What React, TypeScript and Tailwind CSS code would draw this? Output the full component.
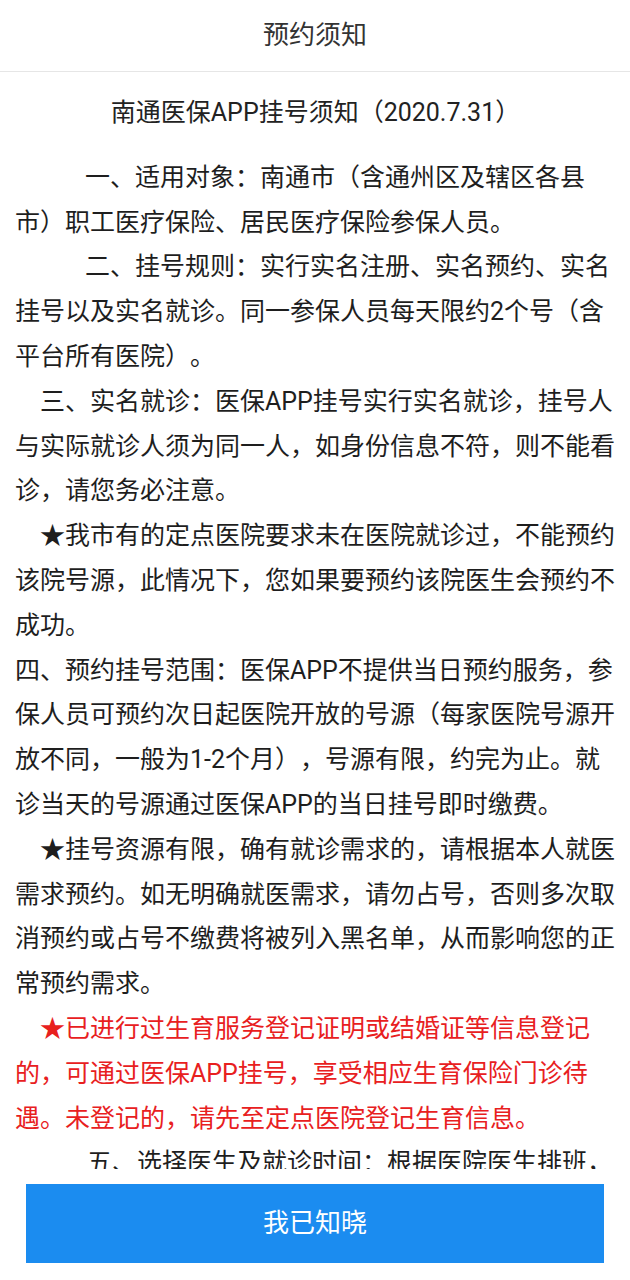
import React from 'react';

type Para = {
  text: string;
  indent: string;
  red?: boolean;
};

// 正文段落，缩进按截图量出来
const paragraphs: Para[] = [
  { text: '一、适用对象：南通市（含通州区及辖区各县市）职工医疗保险、居民医疗保险参保人员。', indent: 'indent-[70px]' },
  { text: '二、挂号规则：实行实名注册、实名预约、实名挂号以及实名就诊。同一参保人员每天限约2个号（含平台所有医院）。', indent: 'indent-[70px]' },
  { text: '三、实名就诊：医保APP挂号实行实名就诊，挂号人与实际就诊人须为同一人，如身份信息不符，则不能看诊，请您务必注意。', indent: 'indent-[25px]' },
  { text: '★我市有的定点医院要求未在医院就诊过，不能预约该院号源，此情况下，您如果要预约该院医生会预约不成功。', indent: 'indent-[25px]' },
  { text: '四、预约挂号范围：医保APP不提供当日预约服务，参保人员可预约次日起医院开放的号源（每家医院号源开放不同，一般为1-2个月），号源有限，约完为止。就诊当天的号源通过医保APP的当日挂号即时缴费。', indent: 'indent-0' },
  { text: '★挂号资源有限，确有就诊需求的，请根据本人就医需求预约。如无明确就医需求，请勿占号，否则多次取消预约或占号不缴费将被列入黑名单，从而影响您的正常预约需求。', indent: 'indent-[25px]' },
  { text: '★已进行过生育服务登记证明或结婚证等信息登记的，可通过医保APP挂号，享受相应生育保险门诊待遇。未登记的，请先至定点医院登记生育信息。', indent: 'indent-[25px]', red: true },
  { text: '五、选择医生及就诊时间：根据医院医生排班，选择需要预约的医生及就诊时间段，确认预约信息后提交。', indent: 'indent-[72px]' },
];

function App() {
  return (
    <div className="h-screen flex flex-col bg-white font-['Roboto','Noto_Sans_CJK_SC',sans-serif] [text-spacing-trim:space-all]">
      {/* 顶部标题栏 */}
      <div className="h-[72px] shrink-0 flex items-center justify-center border-b border-[#e6e6e6]">
        <span className="text-[26px] text-[#333]">预约须知</span>
      </div>

      {/* 须知正文，超出部分被按钮区域遮住 */}
      <div className="flex-1 overflow-hidden pt-[19px] pl-[15px] pr-[14px]">
        <p className="text-center text-[25px] leading-[44.8px] text-[#222] mb-[20px]">
          南通医保APP挂号须知（2020.7.31）
        </p>
        {paragraphs.map((p, i) => (
          <p
            key={i}
            className={`${p.indent} text-[25px] leading-[44.8px] ${p.red ? 'text-[#e8201e]' : 'text-[#1e1e1e]'}`}
          >
            {p.text}
          </p>
        ))}
      </div>

      {/* 底部按钮 */}
      <div className="shrink-0 pt-[15px] pb-[17px] px-[26px]">
        <button className="w-full h-[79px] bg-[#1b8cf0] text-white text-[26px] flex items-center justify-center">
          我已知晓
        </button>
      </div>
    </div>
  );
}

export default App;
